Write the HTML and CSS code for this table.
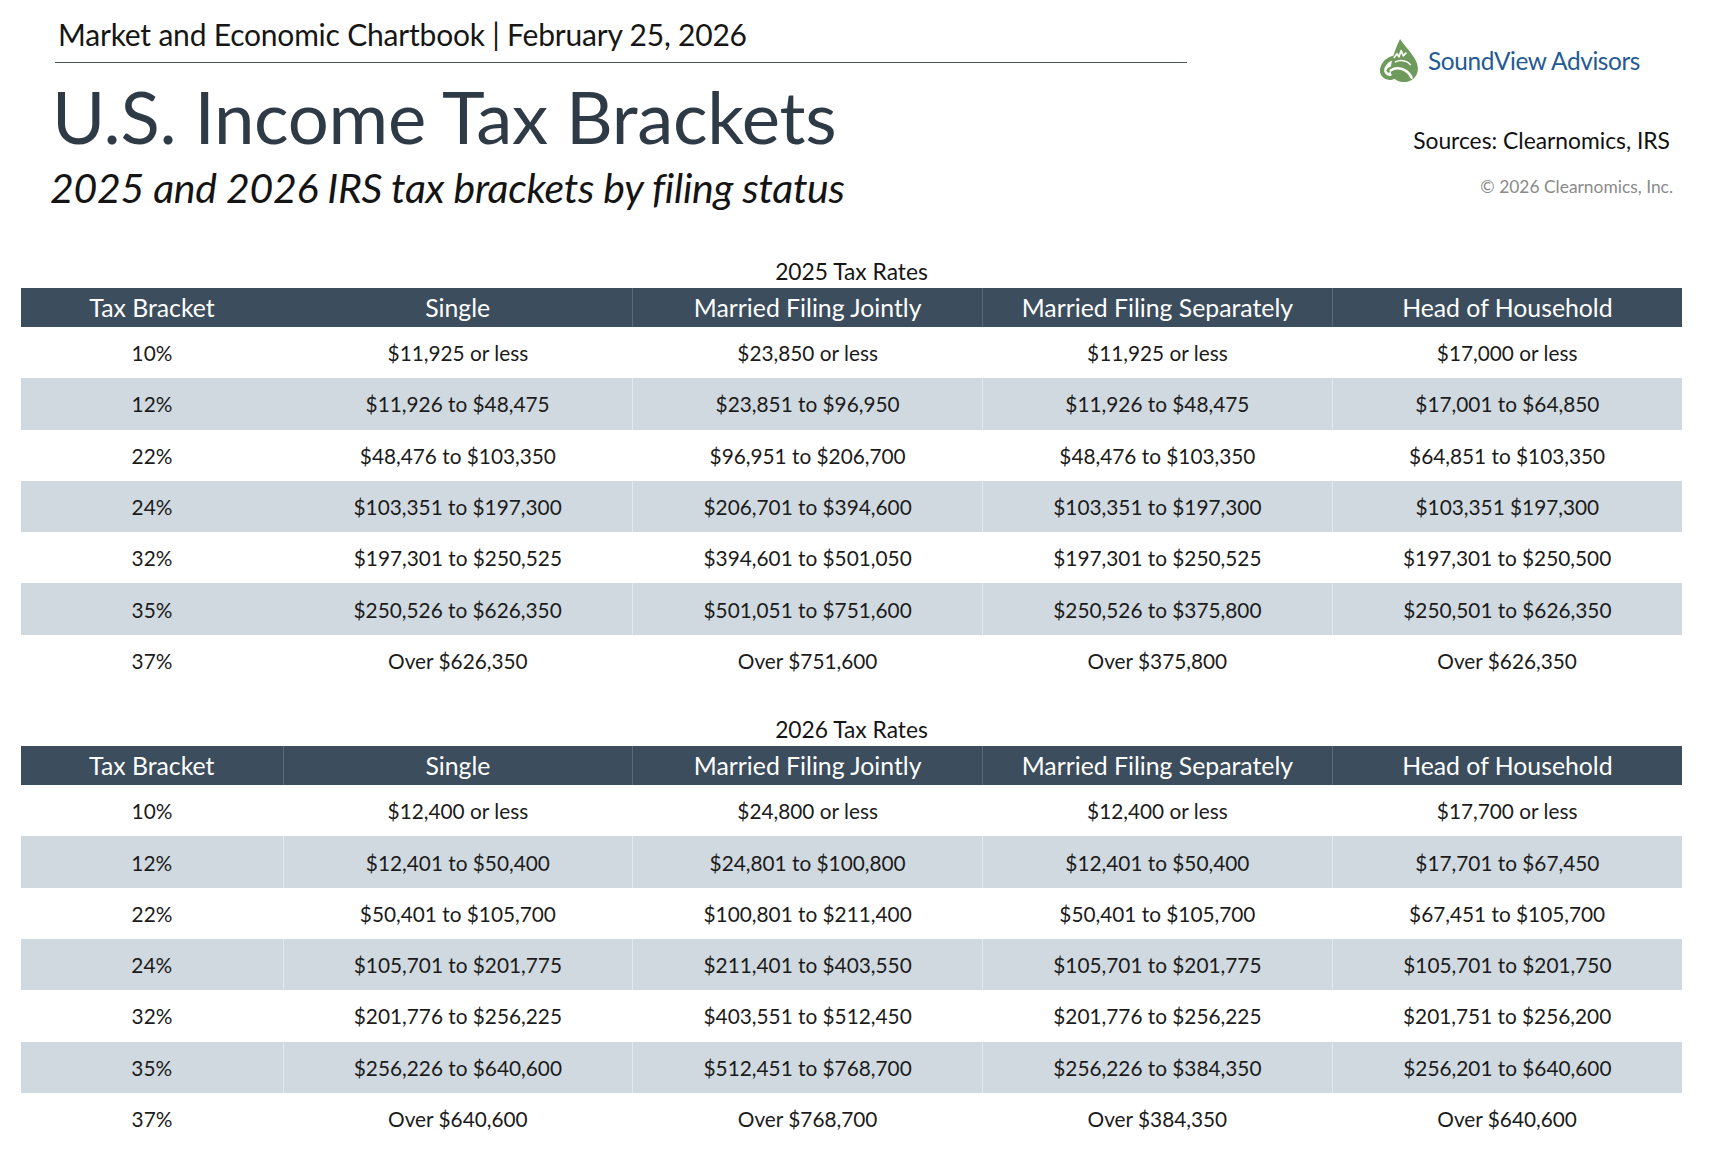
FILE: index.html
```html
<!DOCTYPE html>
<html lang="en">
<head>
<meta charset="utf-8">
<title>U.S. Income Tax Brackets</title>
<link rel="stylesheet" href="styles.css">
</head>
<body>
<div class="page">
  <header class="top">
    <div class="heading">
      <div class="kicker">Market and Economic Chartbook | February 25, 2026</div>
      <div class="rule"></div>
      <h1 class="title">U.S. Income Tax Brackets</h1>
      <p class="subtitle">2025 and 2026 IRS tax brackets by filing status</p>
    </div>
    <div class="aside">
      <div class="logo">
        <svg class="logo-mark" viewBox="0 0 42 42" width="44" height="44" aria-hidden="true">
          <path d="M23 1 C27 8 40 19 40 29 C40 37 34 42 26 42 C19 42 14 37 14 31 C14 22 19 9 23 1 Z" fill="#6e9a5c"/>
          <path d="M16 19 C7 22 3 31 8 36 C12 40 19 38 19 33 C19 29 14 28 12 31" fill="none" stroke="#6e9a5c" stroke-width="4" stroke-linecap="round"/>
          <path d="M17 19 L20 15 L22 18 L24 12 L26 17 L29 14" fill="none" stroke="#fff" stroke-width="1.6" stroke-linejoin="round"/>
          <path d="M18 23 C24 20 31 22 33 26" fill="none" stroke="#fff" stroke-width="1.4"/>
          <path d="M14 31 C20 27 30 29 34 38" fill="none" stroke="#fff" stroke-width="2.4" stroke-linecap="round"/>
        </svg>
        <span class="logo-text">SoundView Advisors</span>
      </div>
      <div class="sources">Sources: Clearnomics, IRS</div>
      <div class="copyright">© 2026 Clearnomics, Inc.</div>
    </div>
  </header>

  <section class="block block-2025">
    <div class="caption">2025 Tax Rates</div>
    <table class="rates">
      <colgroup><col class="c-first"><col><col><col><col></colgroup>
      <thead>
        <tr><th>Tax Bracket</th><th>Single</th><th>Married Filing Jointly</th><th>Married Filing Separately</th><th>Head of Household</th></tr>
      </thead>
      <tbody>
        <tr><td>10%</td><td>$11,925 or less</td><td>$23,850 or less</td><td>$11,925 or less</td><td>$17,000 or less</td></tr>
        <tr class="alt"><td>12%</td><td>$11,926 to $48,475</td><td>$23,851 to $96,950</td><td>$11,926 to $48,475</td><td>$17,001 to $64,850</td></tr>
        <tr><td>22%</td><td>$48,476 to $103,350</td><td>$96,951 to $206,700</td><td>$48,476 to $103,350</td><td>$64,851 to $103,350</td></tr>
        <tr class="alt"><td>24%</td><td>$103,351 to $197,300</td><td>$206,701 to $394,600</td><td>$103,351 to $197,300</td><td>$103,351 $197,300</td></tr>
        <tr><td>32%</td><td>$197,301 to $250,525</td><td>$394,601 to $501,050</td><td>$197,301 to $250,525</td><td>$197,301 to $250,500</td></tr>
        <tr class="alt"><td>35%</td><td>$250,526 to $626,350</td><td>$501,051 to $751,600</td><td>$250,526 to $375,800</td><td>$250,501 to $626,350</td></tr>
        <tr><td>37%</td><td>Over $626,350</td><td>Over $751,600</td><td>Over $375,800</td><td>Over $626,350</td></tr>
      </tbody>
    </table>
  </section>

  <section class="block block-2026">
    <div class="caption">2026 Tax Rates</div>
    <table class="rates">
      <colgroup><col class="c-first"><col><col><col><col></colgroup>
      <thead>
        <tr><th>Tax Bracket</th><th>Single</th><th>Married Filing Jointly</th><th>Married Filing Separately</th><th>Head of Household</th></tr>
      </thead>
      <tbody>
        <tr><td>10%</td><td>$12,400 or less</td><td>$24,800 or less</td><td>$12,400 or less</td><td>$17,700 or less</td></tr>
        <tr class="alt"><td>12%</td><td>$12,401 to $50,400</td><td>$24,801 to $100,800</td><td>$12,401 to $50,400</td><td>$17,701 to $67,450</td></tr>
        <tr><td>22%</td><td>$50,401 to $105,700</td><td>$100,801 to $211,400</td><td>$50,401 to $105,700</td><td>$67,451 to $105,700</td></tr>
        <tr class="alt"><td>24%</td><td>$105,701 to $201,775</td><td>$211,401 to $403,550</td><td>$105,701 to $201,775</td><td>$105,701 to $201,750</td></tr>
        <tr><td>32%</td><td>$201,776 to $256,225</td><td>$403,551 to $512,450</td><td>$201,776 to $256,225</td><td>$201,751 to $256,200</td></tr>
        <tr class="alt"><td>35%</td><td>$256,226 to $640,600</td><td>$512,451 to $768,700</td><td>$256,226 to $384,350</td><td>$256,201 to $640,600</td></tr>
        <tr><td>37%</td><td>Over $640,600</td><td>Over $768,700</td><td>Over $384,350</td><td>Over $640,600</td></tr>
      </tbody>
    </table>
  </section>
</div>
</body>
</html>
```

FILE: styles.css
```css
* { box-sizing: border-box; }

html, body {
  margin: 0;
  padding: 0;
  background: #ffffff;
}

body {
  font-family: "Lato", "Open Sans", sans-serif;
  color: #1b1b1b;
  width: 1718px;
  height: 1172px;
  overflow: hidden;
}

.page {
  padding: 0 36px 0 21px;
}

/* ---------- top area ---------- */
.top {
  display: flex;
  justify-content: space-between;
  height: 228px;
}

.heading {
  padding-left: 34px;
  width: 1166px;
}

.kicker {
  font-size: 30px;
  line-height: 34px;
  padding-top: 17px;
  padding-left: 3px;
  color: #161616;
  letter-spacing: -0.2px;
}

.rule {
  height: 1px;
  background: #4d5660;
  margin-top: 11px;
}

.title {
  margin: 8px 0 0 -3px;
  font-weight: 400;
  font-size: 72.5px;
  line-height: 90px;
  color: #2e3a45;
  letter-spacing: -0.3px;
}

.subtitle {
  margin: 3px 0 0 -5px;
  font-style: italic;
  font-size: 41px;
  line-height: 48px;
  color: #141414;
  letter-spacing: -0.3px;
}

.aside {
  display: flex;
  flex-direction: column;
  align-items: flex-end;
  padding-top: 38px;
}

.logo {
  display: flex;
  align-items: center;
  gap: 8px;
  margin-right: 42px;
}

.logo-mark {
  display: block;
}

.logo-text {
  font-family: "Lato", sans-serif;
  font-size: 24.4px;
  color: #245a93;
  letter-spacing: -0.4px;
}

.sources {
  font-size: 22.8px;
  color: #111;
  margin-top: 44px;
  margin-right: 12px;
}

.copyright {
  font-size: 17.4px;
  color: #8a8a8a;
  margin-top: 22px;
  margin-right: 9px;
}

/* ---------- tables ---------- */
.block {
  width: 1661px;
}

.block-2026 {
  margin-top: 29px;
}

.caption {
  text-align: center;
  font-size: 22.8px;
  line-height: 28px;
  color: #151515;
  margin-top: 29px;
  margin-bottom: 3px;
}

.block-2026 .caption {
  margin-top: 0;
}

.rates {
  width: 1661px;
  border-collapse: collapse;
  table-layout: fixed;
}

.rates .c-first {
  width: 262px;
}

.rates th {
  background: #3c4d5d;
  color: #ffffff;
  font-weight: 400;
  font-size: 24.8px;
  height: 39px;
  padding: 0;
  text-align: center;
  border-left: 1px solid #5a6a79;
}

.rates th:first-child {
  border-left: none;
}

.block-2025 .rates th:nth-child(2) {
  border-left: none;
}

.rates td {
  height: 51.3px;
  padding: 0;
  text-align: center;
  font-size: 20.8px;
  color: #1b1b1b;
}

.rates tr.alt td {
  background: #d0d9df;
  border-left: 1px solid #e4e9ed;
}

.rates tr.alt td:first-child {
  border-left: none;
}

.block-2025 .rates tr.alt td:nth-child(2) {
  border-left: none;
}
```
